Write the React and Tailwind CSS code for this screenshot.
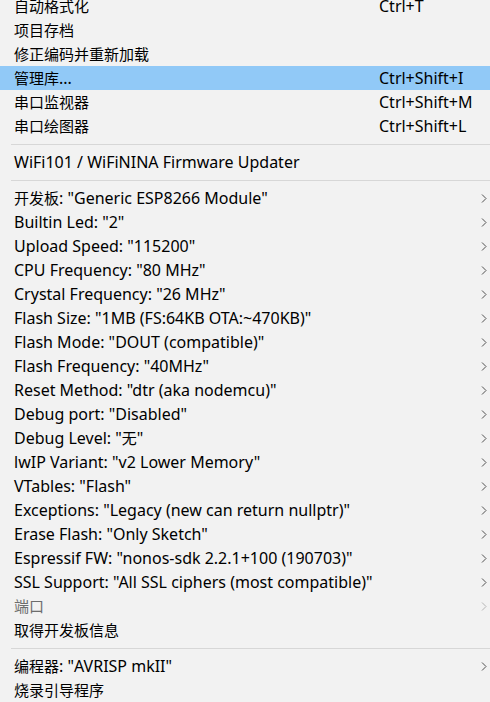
import React from 'react';

const topItems = [
    { label: '自动格式化', shortcut: 'Ctrl+T' },
    { label: '项目存档' },
    { label: '修正编码并重新加载' },
    { label: '管理库...', shortcut: 'Ctrl+Shift+I', active: true },
    { label: '串口监视器', shortcut: 'Ctrl+Shift+M' },
    { label: '串口绘图器', shortcut: 'Ctrl+Shift+L' },
];

const boardItems = [
    { label: '开发板: "Generic ESP8266 Module"', sub: true },
    { label: 'Builtin Led: "2"', sub: true },
    { label: 'Upload Speed: "115200"', sub: true },
    { label: 'CPU Frequency: "80 MHz"', sub: true },
    { label: 'Crystal Frequency: "26 MHz"', sub: true },
    { label: 'Flash Size: "1MB (FS:64KB OTA:~470KB)"', sub: true },
    { label: 'Flash Mode: "DOUT (compatible)"', sub: true },
    { label: 'Flash Frequency: "40MHz"', sub: true },
    { label: 'Reset Method: "dtr (aka nodemcu)"', sub: true },
    { label: 'Debug port: "Disabled"', sub: true },
    { label: 'Debug Level: "无"', sub: true },
    { label: 'lwIP Variant: "v2 Lower Memory"', sub: true },
    { label: 'VTables: "Flash"', sub: true },
    { label: 'Exceptions: "Legacy (new can return nullptr)"', sub: true },
    { label: 'Erase Flash: "Only Sketch"', sub: true },
    { label: 'Espressif FW: "nonos-sdk 2.2.1+100 (190703)"', sub: true },
    { label: 'SSL Support: "All SSL ciphers (most compatible)"', sub: true },
    { label: '端口', sub: true, disabled: true },
    { label: '取得开发板信息' },
];

const bottomItems = [
    { label: '编程器: "AVRISP mkII"', sub: true },
    { label: '烧录引导程序' },
];

// CJK runs stay at 15px, latin runs a bit bigger to match the YaHei widths
function MixedText({ text }) {
    const parts = text.split(/([\u3000-\u303f\u4e00-\u9fff]+)/).filter(Boolean);
    return parts.map((p, i) =>
        /[\u3000-\u303f\u4e00-\u9fff]/.test(p)
            ? <span key={i} className="text-[15px]">{p}</span>
            : <span key={i} className="text-[16px]">{p}</span>
    );
}

function Chevron({ disabled }) {
    return (
        <svg width="6" height="9" viewBox="0 0 6 9" className="mr-[3px]">
            <path d="M1 0.5 L5 4.5 L1 8.5" fill="none" stroke={disabled ? '#b4b4b4' : '#505050'} strokeWidth="1" />
        </svg>
    );
}

function MenuItem({ item }) {
    return (
        <div className={`h-6 shrink-0 flex items-center pl-[14px] ${item.active ? 'bg-[#91c9f7]' : ''}`}>
            <span className={`flex-1 whitespace-nowrap ${item.disabled ? 'text-[#6d6d6d]' : 'text-black'}`}>
                <MixedText text={item.label} />
            </span>
            {item.shortcut && (
                <span className="w-[111px] whitespace-nowrap text-black">
                    <MixedText text={item.shortcut} />
                </span>
            )}
            {item.sub && <Chevron disabled={item.disabled} />}
        </div>
    );
}

function Separator() {
    return (
        <div className="h-3 shrink-0 flex items-center pl-[11px]">
            <div className="h-px flex-1 bg-[#d7d7d7]" />
        </div>
    );
}

export default function App() {
    return (
        <div className="w-[490px] h-[702px] overflow-hidden bg-[#f2f2f2] text-[15px] leading-6" style={{ fontFamily: '"Noto Sans", "Noto Sans CJK SC", sans-serif' }}>
            <div className="flex flex-col mt-[-6px]">
                {topItems.map((item, i) => <MenuItem key={i} item={item} />)}
                <Separator />
                <MenuItem item={{ label: 'WiFi101 / WiFiNINA Firmware Updater' }} />
                <Separator />
                {boardItems.map((item, i) => <MenuItem key={i} item={item} />)}
                <Separator />
                {bottomItems.map((item, i) => <MenuItem key={i} item={item} />)}
            </div>
        </div>
    );
}
